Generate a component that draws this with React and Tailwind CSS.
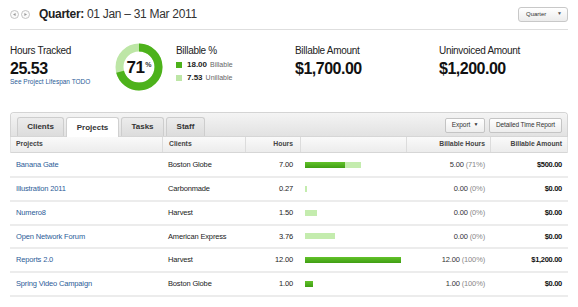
import React from "react";

const rows = [
  { p: "Banana Gate", c: "Boston Globe", h: "7.00", hv: 7, b: 5, bh: "5.00", pct: "(71%)", amt: "$500.00" },
  { p: "Illustration 2011", c: "Carbonmade", h: "0.27", hv: 0.27, b: 0, bh: "0.00", pct: "(0%)", amt: "$0.00" },
  { p: "Numero8", c: "Harvest", h: "1.50", hv: 1.5, b: 0, bh: "0.00", pct: "(0%)", amt: "$0.00" },
  { p: "Open Network Forum", c: "American Express", h: "3.76", hv: 3.76, b: 0, bh: "0.00", pct: "(0%)", amt: "$0.00" },
  { p: "Reports 2.0", c: "Harvest", h: "12.00", hv: 12, b: 12, bh: "12.00", pct: "(100%)", amt: "$1,200.00" },
  { p: "Spring Video Campaign", c: "Boston Globe", h: "1.00", hv: 1, b: 1, bh: "1.00", pct: "(100%)", amt: "$0.00" },
];

function NavArrow({ dir }) {
  return (
    <svg width="9" height="9" viewBox="0 0 9 9">
      <circle cx="4.5" cy="4.5" r="4" fill="#fafafa" stroke="#b5b5b5" strokeWidth="0.8" />
      {dir === "left" ? (
        <path d="M3 4.5 L5.6 2.9 L5.6 6.1 Z" fill="#9a9a9a" />
      ) : (
        <path d="M6 4.5 L3.4 2.9 L3.4 6.1 Z" fill="#9a9a9a" />
      )}
    </svg>
  );
}

function Donut() {
  const r = 19.5;
  const c = 2 * Math.PI * r;
  const pct = 0.705;
  return (
    <div className="relative w-[48px] h-[48px]">
      <svg width="48" height="48" viewBox="0 0 48 48">
        <circle cx="24" cy="24" r={r} fill="none" stroke="#bde6a6" strokeWidth="8" />
        <circle
          cx="24"
          cy="24"
          r={r}
          fill="none"
          stroke="#4db21b"
          strokeWidth="8"
          strokeDasharray={`${c * pct} ${c}`}
          transform="rotate(-90 24 24)"
        />
      </svg>
      <div className="absolute inset-0 flex items-center justify-center">
        <span className="text-[17px] font-bold text-[#111] leading-none tracking-[-0.5px]">71</span>
        <span className="text-[7px] font-bold text-[#333] leading-none -mt-[6px] ml-[1px]">%</span>
      </div>
    </div>
  );
}

export default function App() {
  return (
    <div className="w-[578px] h-[307px] bg-white overflow-hidden font-['Liberation_Sans',Arial,sans-serif] text-[#222]">
      <div className="px-[10px]">
        {/* Header */}
        <div className="h-[30px] flex items-center border-b border-[#dedede]">
          <div className="flex items-center gap-[2px]">
            <NavArrow dir="left" />
            <NavArrow dir="right" />
          </div>
          <div className="ml-[9px] text-[12px] leading-none tracking-[-0.3px] text-[#222] -mt-[1px]">
            <span className="font-bold">Quarter:</span>{" "}
            <span className="text-[#333]">01 Jan – 31 Mar 2011</span>
          </div>
          <div className="ml-auto -mt-[1px] h-[15px] w-[50px] rounded-[3px] border border-[#c8c8c8] bg-gradient-to-b from-white to-[#ececec] flex items-center pl-[7px] pr-[5px] text-[6px] text-[#333]">
            <span>Quarter</span>
            <span className="ml-auto text-[5px] text-[#555]">▼</span>
          </div>
        </div>

        {/* Stats */}
        <div className="flex h-[82px] pt-[15px]">
          <div className="w-[105px]">
            <div className="text-[10px] leading-[12px] tracking-[-0.3px] text-[#222]">Hours Tracked</div>
            <div className="text-[16px] leading-[18px] font-bold text-[#111] mt-[3px] tracking-[-0.5px]">25.53</div>
            <div className="text-[6.5px] leading-[8px] text-[#2c5c98]">See Project Lifespan TODO</div>
          </div>
          <div className="w-[61px] -mt-[2px]">
            <Donut />
          </div>
          <div className="w-[119px]">
            <div className="text-[10px] leading-[12px] tracking-[-0.3px] text-[#222]">Billable %</div>
            <div className="flex items-center mt-[2px] text-[8px] leading-[12px]">
              <span className="w-[6px] h-[6px] bg-[#4db21b] mr-[5px]" />
              <span className="font-bold text-[#222]">18.00</span>
              <span className="ml-[3px] text-[#666] text-[7px]">Billable</span>
            </div>
            <div className="flex items-center mt-[1px] text-[8px] leading-[12px]">
              <span className="w-[6px] h-[6px] bg-[#bde6a6] mr-[5px]" />
              <span className="font-bold text-[#222]">7.53</span>
              <span className="ml-[3px] text-[#666] text-[7px]">Unillable</span>
            </div>
          </div>
          <div className="w-[144px]">
            <div className="text-[10px] leading-[12px] tracking-[-0.3px] text-[#222]">Billable Amount</div>
            <div className="text-[16px] leading-[18px] font-bold text-[#111] mt-[3px] tracking-[-0.5px]">$1,700.00</div>
          </div>
          <div>
            <div className="text-[10px] leading-[12px] tracking-[-0.3px] text-[#222]">Uninvoiced Amount</div>
            <div className="text-[16px] leading-[18px] font-bold text-[#111] mt-[3px] tracking-[-0.5px]">$1,200.00</div>
          </div>
        </div>

        {/* Panel */}
        <div className="rounded-t-[4px] border-x border-t border-[#d4d4d4]">
          <div className="h-[24px] bg-gradient-to-b from-[#f4f4f4] to-[#e2e2e2] rounded-t-[4px] flex items-end pl-[6px] pr-[5px] border-b border-[#d6d6d6]">
            {[
              { t: "Clients", w: "w-[47px]" },
              { t: "Projects", w: "w-[53px]", active: true },
              { t: "Tasks", w: "w-[43px]" },
              { t: "Staff", w: "w-[39px]" },
            ].map((tab) => (
              <div
                key={tab.t}
                className={`${tab.w} h-[19px] mr-[2px] rounded-t-[3px] border-x border-t flex items-center justify-center text-[8px] font-bold text-[#333] ${
                  tab.active
                    ? "bg-white border-[#d0d0d0] h-[20px] -mb-[1px]"
                    : "bg-gradient-to-b from-[#ececec] to-[#dcdcdc] border-[#cdcdcd]"
                }`}
              >
                {tab.t}
              </div>
            ))}
            <div className="ml-auto self-center flex gap-[4px] mt-[1px]">
              <div className="h-[15px] w-[40px] rounded-[2px] border border-[#c4c4c4] bg-gradient-to-b from-white to-[#ededed] flex items-center justify-center text-[6.5px] text-[#333]">
                Export <span className="ml-[3px] text-[5px]">▼</span>
              </div>
              <div className="h-[15px] w-[73px] rounded-[2px] border border-[#c4c4c4] bg-gradient-to-b from-white to-[#ededed] flex items-center justify-center text-[6.5px] tracking-[-0.1px] text-[#333]">
                Detailed Time Report
              </div>
            </div>
          </div>
        </div>

        {/* Table */}
        <div className="border-x border-[#e2e2e2]">
          <div className="grid grid-cols-[152px_83px_55px_106px_84px_1fr] h-[16px] bg-gradient-to-b from-[#fafafa] to-[#ececec] border-b border-[#d6d6d6] text-[6.8px] font-bold text-[#444] items-stretch">
            <div className="flex items-center pl-[5px] border-r border-[#dcdcdc]">Projects</div>
            <div className="flex items-center pl-[6px] border-r border-[#dcdcdc]">Clients</div>
            <div className="flex items-center justify-end pr-[7px] border-r border-[#dcdcdc]">Hours</div>
            <div className="border-r border-[#dcdcdc]" />
            <div className="flex items-center justify-end pr-[5px] border-r border-[#dcdcdc]">Billable Hours</div>
            <div className="flex items-center justify-end pr-[5px]">Billable Amount</div>
          </div>
        </div>
        <div>
          {rows.map((r, i) => (
            <div
              key={r.p}
              className={`grid grid-cols-[152px_83px_55px_106px_84px_1fr] border-b-2 border-[#ececec] text-[7.5px] tracking-[-0.15px] items-center ${
                i === 0 ? "h-[25px]" : i % 2 === 1 ? "h-[23.5px]" : "h-[24px]"
              }`}
            >
              <div className="pl-[6px] text-[#2c5c98]">{r.p}</div>
              <div className="pl-[6px] text-[#222]">{r.c}</div>
              <div className="text-right pr-[7px] text-[#222]">{r.h}</div>
              <div className="pl-[5px] flex items-center">
                <div className="relative h-[6px] bg-[#c4ecae]" style={{ width: `${Math.max(r.hv * 8, 2)}px` }}>
                  {r.b > 0 && (
                    <div
                      className="absolute left-0 top-0 h-full bg-gradient-to-b from-[#62c22a] to-[#3f9e12]"
                      style={{ width: `${r.b * 8}px` }}
                    />
                  )}
                </div>
              </div>
              <div className="text-right pr-[5px] text-[#333]">
                {r.bh} <span className="text-[#888]">{r.pct}</span>
              </div>
              <div className="text-right pr-[6px] font-bold text-[#111] tracking-[-0.3px]">{r.amt}</div>
            </div>
          ))}
        </div>
      </div>
    </div>
  );
}
